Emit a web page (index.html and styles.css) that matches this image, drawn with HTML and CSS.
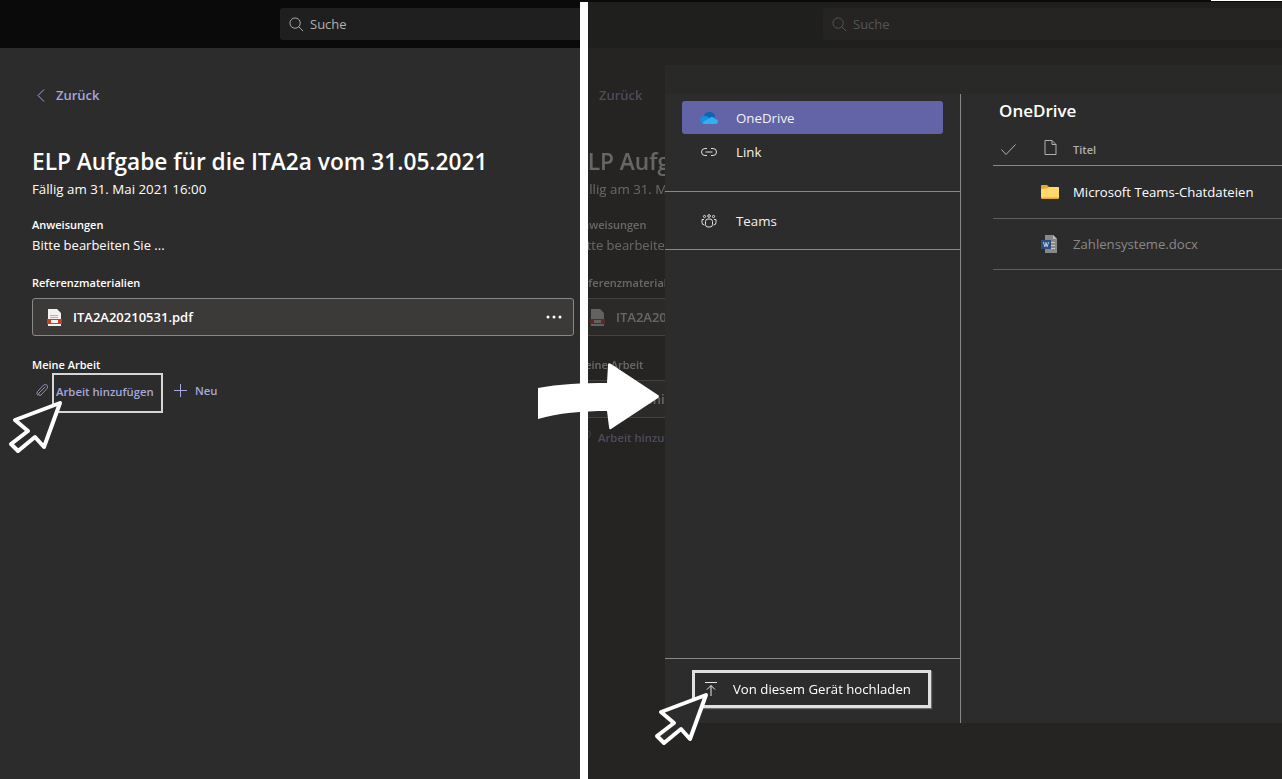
FILE: index.html
```html
<!DOCTYPE html>
<html lang="de">
<head>
<meta charset="utf-8">
<title>ELP Aufgabe</title>
<link rel="stylesheet" href="styles.css">
</head>
<body>
<div class="page">
  <section class="pane pane-left">
    <header class="topbar">
      <div class="search">
        <svg class="search-icon" viewBox="0 0 16 16"><circle cx="6.500" cy="6.500" r="5.500"/><path d="M10.500 10.500l4.500 4.500"/></svg>
        <span>Suche</span>
      </div>
    </header>
    <main class="assignment">
      <a class="back"><svg class="chevron" viewBox="0 0 8 13"><path d="M7 .5L1 6.500l6 6"/></svg>Zurück</a>
      <h1 class="title">ELP Aufgabe für die ITA2a vom 31.05.2021</h1>
      <p class="due">Fällig am 31. Mai 2021 16:00</p>
      <h2 class="label first">Anweisungen</h2>
      <p class="body-text">Bitte bearbeiten Sie ...</p>
      <h2 class="label">Referenzmaterialien</h2>
      <div class="file-card">
        <svg class="pdf" viewBox="0 0 15 17"><path class="pdf-page" d="M1 0h9l4 4v13H1z"/><path class="pdf-line" d="M3 6h8v1H3zM3 8h8v1H3z"/><path class="pdf-band" d="M0 10h15v5H0z"/><path class="pdf-page" d="M4 11h7v3H4z"/></svg>
        <span class="file-name">ITA2A20210531.pdf</span>
        <svg class="more" viewBox="0 0 16 4"><circle cx="2" cy="2" r="1.500"/><circle cx="8" cy="2" r="1.500"/><circle cx="14" cy="2" r="1.500"/></svg>
      </div>
      <h2 class="label work">Meine Arbeit</h2>
      <div class="actions">
        <svg class="clip" viewBox="0 0 12 13"><path d="M9.500 2.500L3 9a1.400 1.400 0 0 0 2 2l6-6.500a2.400 2.400 0 0 0-3.400-3.400L1.500 7.500a3 3 0 0 0 .5 4"/></svg>
        <span class="action-box">Arbeit hinzufügen</span>
        <svg class="plus" viewBox="0 0 13 13"><path d="M6.500 0v13M0 6.500h13"/></svg>
        <span class="action">Neu</span>
      </div>
    </main>
  </section>

  <div class="divider"></div>

  <section class="pane pane-right">
    <div class="top-strip"><span class="strip-mark"></span></div>
    <header class="topbar dim">
      <div class="search">
        <svg class="search-icon" viewBox="0 0 16 16"><circle cx="6.500" cy="6.500" r="5.500"/><path d="M10.500 10.500l4.500 4.500"/></svg>
        <span>Suche</span>
      </div>
    </header>
    <main class="assignment faded">
      <a class="back"><svg class="chevron" viewBox="0 0 8 13"><path d="M7 .5L1 6.500l6 6"/></svg>Zurück</a>
      <h1 class="title">ELP Aufgabe für die ITA2a vom 31.05.2021</h1>
      <p class="due">Fällig am 31. Mai 2021 16:00</p>
      <h2 class="label first">Anweisungen</h2>
      <p class="body-text">Bitte bearbeiten Sie ...</p>
      <h2 class="label">Referenzmaterialien</h2>
      <div class="file-card">
        <svg class="pdf" viewBox="0 0 15 17"><path class="pdf-page" d="M1 0h9l4 4v13H1z"/><path class="pdf-band" d="M0 10h15v5H0z"/><path class="pdf-page" d="M4 11h7v3H4z"/></svg>
        <span class="file-name">ITA2A20210531.pdf</span>
      </div>
      <h2 class="label work">Meine Arbeit</h2>
      <div class="file-card attached">
        <span class="file-name">Ergebnis</span>
      </div>
      <div class="actions tall">
        <svg class="clip" viewBox="0 0 12 13"><path d="M9.500 2.500L3 9a1.400 1.400 0 0 0 2 2l6-6.500a2.400 2.400 0 0 0-3.400-3.400L1.500 7.500a3 3 0 0 0 .5 4"/></svg>
        <span class="action plain">Arbeit hinzufügen</span>
      </div>
    </main>

    <div class="dialog">
      <div class="dialog-top"></div>
      <div class="dialog-body">
        <nav class="sources">
          <div class="source-group primary">
            <div class="source active">
              <svg class="source-icon" viewBox="0 0 18 12"><ellipse fill="#0f64b5" cx="9.500" cy="4.500" rx="5.500" ry="4.500"/><ellipse fill="#1490df" cx="5" cy="8" rx="5" ry="4"/><path fill="#30b0f0" d="M3 12a2 2 0 0 1 .5-2.500L9 6.500a4 4 0 0 1 5-1 3.500 3.500 0 0 1 1 1.500 2.600 2.600 0 0 1 3 2.500A2.500 2.500 0 0 1 15.500 12z"/></svg>
              <span>OneDrive</span>
            </div>
            <div class="source">
              <svg class="source-icon line" viewBox="0 0 18 12"><path d="M7 2.500H5a3.500 3.500 0 0 0 0 7h2M11 2.500h2a3.500 3.500 0 0 1 0 7h-2M5.500 6h7"/></svg>
              <span>Link</span>
            </div>
          </div>
          <div class="source-group secondary">
            <div class="source">
              <svg class="source-icon line teams" viewBox="0 0 16 14"><rect x="4.500" y="5" width="7" height="8" rx="2.500"/><circle cx="8" cy="2" r="1.300"/><circle cx="3.500" cy="2.500" r="1.100"/><circle cx="12.500" cy="2.500" r="1.100"/><path d="M3 5.500H1v3a2.500 2.500 0 0 0 2.500 2.500M13 5.500h2v3a2.500 2.500 0 0 1-2.500 2.500"/></svg>
              <span>Teams</span>
            </div>
          </div>
          <div class="source-footer">
            <div class="upload">
              <svg class="upload-icon" viewBox="0 0 12 14"><path d="M0 .5h12M6 14V3.500M2 7.500l4-4 4 4"/></svg>
              <span>Von diesem Gerät hochladen</span>
            </div>
          </div>
        </nav>
        <div class="browser">
          <h2 class="browser-title">OneDrive</h2>
          <div class="row head">
            <svg class="check" viewBox="0 0 15 11"><path d="M.5 5.500l4.500 5L14.500.5"/></svg>
            <svg class="doc" viewBox="0 0 13 15"><path d="M1 .5h7l4 4v10H1zM8 .5v4h4"/></svg>
            <span>Titel</span>
          </div>
          <div class="row folder-row">
            <span></span>
            <svg class="folder" viewBox="0 0 18 14"><path fill="#e8a72e" d="M0 1a1 1 0 0 1 1-1h5l2 2h9a1 1 0 0 1 1 1v10a1 1 0 0 1-1 1H1a1 1 0 0 1-1-1z"/><path fill="#ffd96a" d="M0 4l7-1 1-1h9a1 1 0 0 1 1 1v9.500H0z"/></svg>
            <span>Microsoft Teams-Chatdateien</span>
          </div>
          <div class="row doc-row">
            <span></span>
            <svg class="word" viewBox="0 0 16 18"><path fill="#8a8886" d="M4 0h8l4 4v14H4z"/><path fill="#bdbbb9" d="M12 0l4 4h-4z"/><path fill="#c8c6c4" d="M10 7h4v1h-4zM10 10h4v1h-4zM10 13h4v1h-4z"/><rect fill="#2b4f80" x="0" y="5" width="10" height="9"/><path fill="#c9d2e0" d="M2 7h1l.8 3.500.9-3.500h.7l.9 3.500L7 7h1l-1.400 5h-.9L5 9.500 4.300 12h-.9z"/></svg>
            <span>Zahlensysteme.docx</span>
          </div>
        </div>
      </div>
    </div>
  </section>

  <svg class="cursor cursor-left" viewBox="0 0 56 56"><path d="M53 3L8 20l13 11L4 44l7 7 17-14 9 10z"/></svg>
  <svg class="cursor cursor-right" viewBox="0 0 56 56"><path d="M53 3L8 20l13 11L4 44l7 7 17-14 9 10z"/></svg>
  <svg class="big-arrow" viewBox="0 0 124 70"><path d="M0 26C20 22 45 21 69 21L70 3Q70 0 73 2L120 33Q122 34 120 36L73 67Q71 68 71 65L69 49C45 49 20 51 0 57z"/></svg>
</div>
</body>
</html>
```

FILE: styles.css
```css
* { box-sizing: border-box; }
html, body { margin: 0; padding: 0; }
body {
  font-family: "Open Sans", "Noto Sans", "Liberation Sans", sans-serif;
  background: #2d2c2c;
  color: #fff;
}
h1, h2, p { margin: 0; }
svg { display: block; flex: none; }

.page {
  position: relative;
  display: flex;
  width: 1282px;
  height: 779px;
  overflow: hidden;
  background: #0a0a0a;
}
.pane { position: relative; overflow: hidden; display: flex; flex-direction: column; }
.pane-left { width: 580px; background: #2d2c2c; }
.divider { width: 8px; margin-top: 2px; background: #fff; }
.pane-right { flex: 1; background: #252423; }

.top-strip { height: 2px; background: #0a0a0a; display: flex; justify-content: flex-end; flex: none; }
.strip-mark { width: 71px; height: 1px; background: #fff; }

.topbar { height: 48px; flex: none; background: #0a0a0a; padding: 8px 0 0 280px; }
.topbar.dim { height: 46px; background: #1f1f1e; padding: 6px 0 0 235px; }
.search {
  display: flex;
  align-items: center;
  gap: 6px;
  width: 470px;
  height: 32px;
  padding-left: 9px;
  border-radius: 3px;
  background: #1f1f1f;
  color: #b3b0ad;
  font-size: 13px;
}
.dim .search { background: #252423; color: #565553; }
.search-icon { width: 15px; height: 15px; fill: none; stroke: currentColor; stroke-width: 1; }

.assignment { padding: 37px 0 0 32px; flex: 1; }
.faded { margin-left: -45px; opacity: .3; width: 700px; }
.back {
  display: flex;
  align-items: center;
  height: 20px;
  color: #a6a7dc;
  font-size: 13px;
  font-weight: 600;
}
.chevron { width: 8px; height: 13px; margin: 0 11px 0 5px; fill: none; stroke: currentColor; stroke-width: 1; }
.title { margin-top: 41px; font-size: 22.700px; line-height: 32px; font-weight: 600; white-space: nowrap; }
.due { margin-top: 2px; font-size: 13.300px; line-height: 18px; }
.label { margin-top: 19px; font-size: 11px; line-height: 16px; font-weight: 600; }
.body-text { margin-top: 2px; padding-bottom: 1px; font-size: 13px; line-height: 20px; }

.file-card {
  display: flex;
  align-items: center;
  width: 542px;
  height: 38px;
  margin-top: 7px;
  padding: 0 11px 0 14px;
  background: #3b3a39;
  border: 1px solid #8a8886;
  border-radius: 3px;
}
.faded .file-card { width: 700px; }
.attached { margin-bottom: -1px; padding-left: 41px; }
.pdf { width: 15px; height: 17px; }
.pdf-page { fill: #f3f2f1; }
.pdf-line { fill: #b3b0ad; }
.pdf-band { fill: #d13b1f; }
.file-name { margin-left: 11px; font-size: 13px; font-weight: 600; white-space: nowrap; }
.attached .file-name { margin-left: 0; }
.more { width: 16px; height: 4px; margin-left: auto; fill: #fff; }
.label.work { margin-top: 21px; }

.actions { display: flex; align-items: center; height: 40px; padding-bottom: 6px; color: #a6a7dc; font-size: 11.300px; font-weight: 600; }
.actions.tall { padding-bottom: 0; }
.clip { width: 12px; height: 13px; margin: 0 4px 0 4px; fill: none; stroke: currentColor; stroke-width: 1; opacity: .8; }
.action-box {
  display: flex;
  align-items: center;
  width: 111px;
  height: 40px;
  margin-bottom: -6px;
  padding: 0 0 4px 2px;
  border: 2px solid #d6d6d6;
  white-space: nowrap;
}
.plain { margin-left: 3px; white-space: nowrap; }
.plus { width: 13px; height: 13px; margin: 0 8px 0 11px; fill: none; stroke: currentColor; stroke-width: 1; }

.dialog {
  position: absolute;
  left: 77px;
  top: 65px;
  right: 0;
  bottom: 56px;
  display: flex;
  flex-direction: column;
  background: #2d2c2c;
}
.dialog-top { height: 29px; flex: none; background: #292928; }
.dialog-body { flex: 1; display: flex; min-height: 0; }

.sources { width: 296px; flex: none; display: flex; flex-direction: column; border-right: 1px solid #8a8886; }
.source-group { border-bottom: 1px solid #8a8886; padding: 7px 17px 0; }
.primary { height: 98px; }
.secondary { height: 58px; padding-top: 12px; }
.source {
  display: flex;
  align-items: center;
  height: 33px;
  padding-left: 18px;
  gap: 18px;
  border-radius: 3px;
  font-size: 13.300px;
  color: #f3f2f1;
}
.primary .source + .source { margin-top: 1px; }
.active { background: #6264a7; }
.source-icon { width: 18px; height: 12px; }
.line { fill: none; stroke: #e1dfdd; stroke-width: 1; }
.teams { width: 16px; height: 14px; margin-left: 1px; margin-right: 1px; }

.source-footer { margin-top: auto; height: 65px; border-top: 1px solid #8a8886; padding: 11px 0 0 27px; }
.upload {
  display: flex;
  align-items: center;
  width: 239px;
  height: 38px;
  padding-left: 10px;
  gap: 16px;
  border: 3px solid #e0e0e0;
  filter: blur(.4px);
  font-size: 13.200px;
  white-space: nowrap;
  box-shadow: 1px 1px 1px rgba(255,255,255,.3);
}
.upload-icon { width: 12px; height: 14px; fill: none; stroke: #e8e8e8; stroke-width: 1; }

.browser { flex: 1; padding-left: 32px; min-width: 0; }
.browser-title { margin: 5px 0 0 6px; font-size: 17px; line-height: 23px; font-weight: 600; }
.row {
  display: grid;
  grid-template-columns: 48px 32px 1fr;
  align-items: center;
  border-bottom: 1px solid #605e5c;
  font-size: 13.150px;
}
.head { height: 33px; margin-top: 11px; border-bottom-color: #8a8886; color: #b3b0ad; font-size: 11px; font-weight: 600; }
.folder-row { height: 53px; }
.doc-row { height: 51px; color: #8a8886; }
.check { width: 15px; height: 11px; margin-left: 8px; fill: none; stroke: #b3b0ad; stroke-width: 1; }
.doc { width: 13px; height: 15px; margin: -3px 0 0 3px; fill: none; stroke: #b3b0ad; stroke-width: 1; }
.folder { width: 18px; height: 14px; }
.word { width: 16px; height: 18px; }

.cursor { position: absolute; width: 56px; height: 56px; fill: #2d2c2c; stroke: #fff; stroke-width: 4; stroke-linejoin: round; }
.cursor-left { left: 7px; top: 400px; }
.cursor-right { left: 653px; top: 692px; }
.big-arrow { position: absolute; left: 538px; top: 362px; width: 124px; height: 70px; fill: #fff; }
```
